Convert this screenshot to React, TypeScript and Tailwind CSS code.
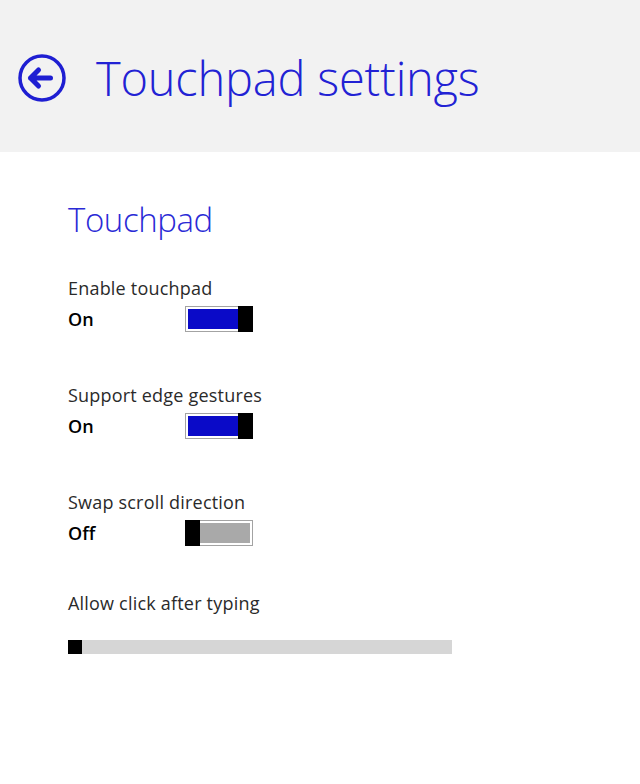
import React from "react";

const Toggle = ({ on }: { on: boolean }) => (
  <div className="flex h-[26px] w-[68px]">
    {!on && <div className="w-[15px] bg-black" />}
    <div
      className={`flex-1 border border-[#a3a3a3] ${on ? "border-r-0 py-[2px] pl-[2px]" : "border-l-0 py-[2px] pr-[2px]"}`}
    >
      <div className={`h-full ${on ? "bg-[#0a0ac8]" : "bg-[#a9a9a9]"}`} />
    </div>
    {on && <div className="w-[15px] bg-black" />}
  </div>
);

const ToggleSetting = ({ label, on }: { label: string; on: boolean }) => (
  <div className="flex flex-col">
    <div className="text-[18px] leading-[22px] tracking-[0.2px] text-[#2a2a2a]">{label}</div>
    <div className="mt-[7px] flex items-center">
      <span className="w-[117px] text-[18px] font-semibold leading-[22px] text-black">{on ? "On" : "Off"}</span>
      <Toggle on={on} />
    </div>
  </div>
);

export default function App() {
  return (
    <div className="h-[784px] w-[640px] bg-white" style={{ fontFamily: '"Open Sans", "Noto Sans", sans-serif' }}>
      <div className="flex h-[152px] items-center gap-[30px] bg-[#f2f2f2] pl-[18px] pt-[4px]">
        <svg width="48" height="48" viewBox="0 0 48 48" fill="none" stroke="#1e1ed2">
          <circle cx="24" cy="24" r="22" strokeWidth="3.5" />
          <path d="M12.5 24h20M20.5 16l-8 8 8 8" strokeWidth="5" strokeLinecap="round" strokeLinejoin="round" />
        </svg>
        <h1 className="text-[47px] font-light leading-none tracking-[-0.2px] text-[#2222d4]">Touchpad settings</h1>
      </div>
      <div className="flex flex-col pl-[68px] pt-[48px]">
        <h2 className="text-[33px] font-light leading-[40px] tracking-[-0.4px] text-[#2a2ad6]">Touchpad</h2>
        <div className="mt-[37px] flex flex-col gap-[52px]">
          <ToggleSetting label="Enable touchpad" on={true} />
          <ToggleSetting label="Support edge gestures" on={true} />
          <ToggleSetting label="Swap scroll direction" on={false} />
        </div>
        <div className="mt-[46px] text-[18px] leading-[22px] tracking-[0.2px] text-[#2a2a2a]">Allow click after typing</div>
        <div className="mt-[26px] flex h-[14px] w-[384px] bg-[#d6d6d6]">
          <div className="w-[14px] bg-black" />
        </div>
      </div>
    </div>
  );
}
